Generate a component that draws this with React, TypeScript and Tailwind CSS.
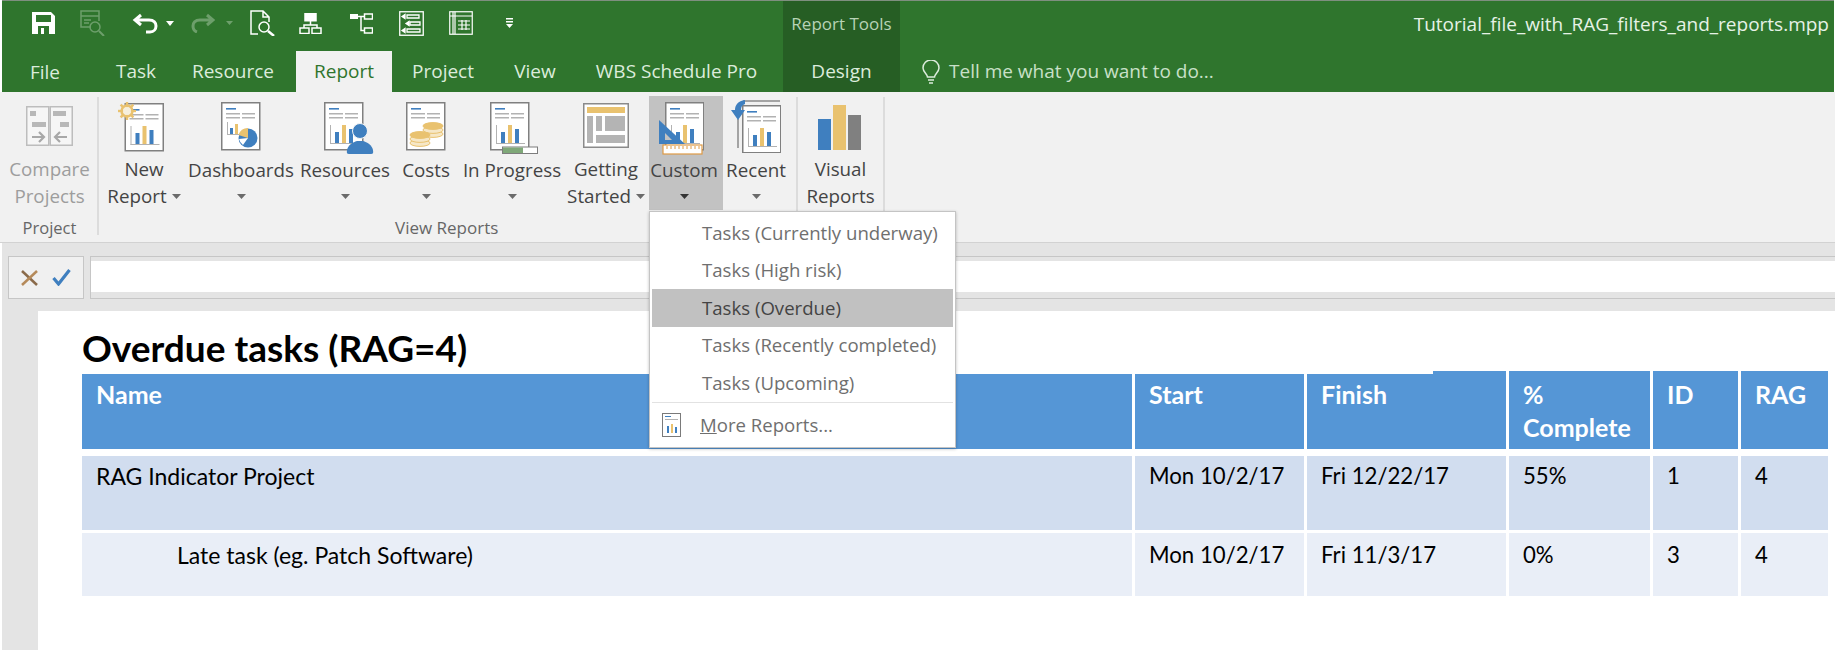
import React from "react";

const BLUE = "#3f7fbf";
const GOLD = "#e9c26f";
const GREY = "#b2b2b2";

// Shared report page glyph used by most of the ribbon buttons
function Page({ x = 0, y = 0, chart = true }: { x?: number; y?: number; chart?: boolean }) {
  return (
    <g transform={`translate(${x} ${y})`}>
      <rect x="0.75" y="0.75" width="38" height="47" fill="#fff" stroke="#808080" strokeWidth="1.5" />
      <rect x="5" y="6" width="10" height="1.6" fill={BLUE} />
      <rect x="5" y="11" width="14" height="1.5" fill={GREY} />
      <rect x="21" y="11" width="13" height="1.5" fill={GREY} />
      <rect x="5" y="15" width="14" height="1.5" fill={GREY} />
      <rect x="21" y="15" width="13" height="1.5" fill={GREY} />
      {chart && (
        <g>
          <rect x="6" y="23" width="1" height="19" fill={GREY} />
          <rect x="6" y="41" width="29" height="1" fill={GREY} />
          <rect x="11" y="30" width="4" height="11" fill={BLUE} />
          <rect x="18" y="23" width="4" height="18" fill={GOLD} />
          <rect x="25" y="27" width="4" height="14" fill={BLUE} />
        </g>
      )}
    </g>
  );
}

function CompareIcon() {
  return (
    <svg width="47" height="40" viewBox="0 0 47 40" className="mt-[10px]">
      <rect x="0.75" y="0.75" width="22" height="38.5" fill="#f6f6f6" stroke="#bdbdbd" strokeWidth="1.5" />
      <rect x="24.25" y="0.75" width="22" height="38.5" fill="#f6f6f6" stroke="#bdbdbd" strokeWidth="1.5" />
      <rect x="4" y="5" width="6" height="5" fill="#b8b8b8" />
      <rect x="27" y="5" width="13" height="5" fill="#b8b8b8" />
      <rect x="6" y="16" width="14" height="5" fill="#b8b8b8" />
      <rect x="34" y="16" width="9" height="5" fill="#b8b8b8" />
      <path d="M6 31h12M13 26l5 5-5 5" fill="none" stroke="#a8a8a8" strokeWidth="2.2" />
      <path d="M41 31H29M34 26l-5 5 5 5" fill="none" stroke="#a8a8a8" strokeWidth="2.2" />
    </svg>
  );
}

function NewReportIcon() {
  const rays = [0, 45, 90, 135];
  return (
    <svg width="46" height="50" viewBox="0 0 46 50" className="mt-[6px] mr-[6px]">
      <Page x={6.5} y={1} />
      <circle cx="9" cy="9" r="5.5" fill="#f4f4f4" stroke={GOLD} strokeWidth="2.4" />
      {rays.map((r) => (
        <rect key={r} x="7.8" y="0" width="2.4" height="18" fill={GOLD} transform={`rotate(${r} 9 9)`} />
      ))}
      <circle cx="9" cy="9" r="4" fill="#f6efdc" />
    </svg>
  );
}

function DashboardIcon() {
  return (
    <svg width="40" height="49" viewBox="0 0 40 49" className="mt-[6px]">
      <Page chart={false} />
      <rect x="6" y="20" width="1" height="13" fill={GREY} />
      <rect x="6" y="32" width="14" height="1" fill={GREY} />
      <rect x="9" y="26" width="3" height="6" fill={BLUE} />
      <rect x="14" y="22" width="3" height="10" fill={GOLD} />
      <circle cx="27" cy="36" r="9.5" fill={BLUE} />
      <path d="M27 36V26a10 10 0 0 0-9.5 7z" fill={GOLD} />
      <path d="M27 36l-9 1a10 10 0 0 0 4 6z" fill="#fff" />
    </svg>
  );
}

function ResourcesIcon() {
  return (
    <svg width="50" height="52" viewBox="0 0 50 52" className="mt-[6px] ml-[8px]">
      <Page />
      <circle cx="36" cy="29" r="7.5" fill={BLUE} stroke="#f4f4f4" strokeWidth="1" />
      <path d="M25 52c-2 0-2.500-1-2-4 1-5 6-8 10-9h6c4 1 9 4 10 9 .5 3 0 4-2 4z" fill={BLUE} />
    </svg>
  );
}

function CoinStack({ x, y, n }: { x: number; y: number; n: number }) {
  return (
    <g transform={`translate(${x} ${y})`}>
      {Array.from({ length: n }).map((_, i) => (
        <ellipse key={i} cx="0" cy={(n - 1 - i) * 4} rx="10" ry="3.400" fill={i === n - 1 ? GOLD : "#f6e7c6"} stroke={GOLD} strokeWidth="1" />
      ))}
    </g>
  );
}

function CostsIcon() {
  return (
    <svg width="40" height="49" viewBox="0 0 40 49" className="mt-[6px]">
      <Page chart={false} />
      <CoinStack x={27} y={24} n={3} />
      <CoinStack x={14} y={33} n={3} />
    </svg>
  );
}

function ProgressIcon() {
  return (
    <svg width="48" height="52" viewBox="0 0 48 52" className="mt-[6px] ml-[4px]">
      <Page />
      <rect x="12.500" y="45" width="35" height="6.500" fill="#fff" stroke="#7d7d7d" />
      <rect x="13" y="45.500" width="20" height="5.500" fill="#7fa878" />
    </svg>
  );
}

function GettingStartedIcon() {
  return (
    <svg width="46" height="45" viewBox="0 0 46 45" className="mt-[7px]">
      <rect x="0.75" y="0.75" width="44.500" height="43.500" fill="#fff" stroke="#8a8a8a" strokeWidth="1.5" />
      <rect x="4" y="4" width="38" height="6" fill={GOLD} />
      <rect x="4" y="13" width="6" height="27" fill="#b4b4b4" />
      <rect x="13" y="13" width="6" height="15" fill="#b4b4b4" />
      <rect x="22" y="13" width="20" height="15" fill="#b4b4b4" />
      <rect x="13" y="32" width="29" height="8" fill="#b4b4b4" />
    </svg>
  );
}

function CustomIcon() {
  return (
    <svg width="46" height="53" viewBox="0 0 46 53" className="mt-[6px] mr-[6px]">
      <Page x={7} />
      <path d="M1 18l26 24H1z" fill={BLUE} />
      <path d="M7 31l7 7H7z" fill="#c2c2c2" />
      <rect x="5" y="43" width="39" height="9" fill="#fff" stroke="#de9a45" strokeWidth="1.2" />
      <path d="M9 44v3M13 44v3M17 44v3M21 44v3M25 44v3M29 44v3M33 44v3M37 44v3M41 44v3" stroke="#de9a45" strokeWidth="1" />
    </svg>
  );
}

function RecentIcon() {
  return (
    <svg width="50" height="54" viewBox="0 0 50 54" className="mt-[3px]">
      <path d="M12 2h37M7 20v29" stroke="#8a8a8a" strokeWidth="1.5" fill="none" />
      <Page x={11} y={6} />
      <path d="M14 1C7 2 4 6 4 11l-4 0 7 10 7-10h-4c0-3 1-5 4-6z" fill={BLUE} />
    </svg>
  );
}

function VisualIcon() {
  return (
    <svg width="43" height="45" viewBox="0 0 43 45" className="mt-[9px] mr-[2px]">
      <rect x="0" y="14" width="13" height="31" fill={BLUE} />
      <rect x="15" y="0" width="13" height="45" fill={GOLD} />
      <rect x="30" y="10" width="13" height="35" fill="#808080" />
    </svg>
  );
}

function Caret({ dark = false }: { dark?: boolean }) {
  return (
    <svg width="9" height="5" viewBox="0 0 9 5" className="inline-block">
      <path d="M0 0h9L4.500 5z" fill={dark ? "#333" : "#6b6b6b"} />
    </svg>
  );
}

function RibbonButton({
  width,
  icon,
  line1,
  line2,
  caretInline = false,
  active = false,
  disabled = false,
}: {
  width: string;
  icon: React.ReactNode;
  line1: string;
  line2?: string;
  caretInline?: boolean;
  active?: boolean;
  disabled?: boolean;
}) {
  return (
    <div
      className={`${width} h-[114px] flex flex-col items-center shrink-0 whitespace-nowrap text-[18.8px] leading-[27px] ${
        active ? "bg-[#c2c2c2]" : ""
      } ${disabled ? "text-[#9d9d9d]" : "text-[#444444]"}`}
    >
      <div className="h-[63px] flex justify-center items-start">{icon}</div>
      <div>{line1}</div>
      <div className="h-[27px] flex items-center gap-[5px]">
        {line2 && <span>{line2}</span>}
        {caretInline && <Caret />}
        {!line2 && <Caret dark={active} />}
      </div>
    </div>
  );
}

function Separator() {
  return <div className="w-[2px] h-[138px] mt-[5px] bg-[#dcdcdc] shrink-0" />;
}

const tabs = [
  { label: "File", cls: "w-[86px] pt-[1px]" },
  { label: "Task", cls: "w-[96px]" },
  { label: "Resource", cls: "w-[98px] mr-[14px]" },
];

const menuItems = ["Tasks (Currently underway)", "Tasks (High risk)", "Tasks (Overdue)", "Tasks (Recently completed)", "Tasks (Upcoming)"];

const columns = "grid grid-cols-[1050px_169px_199px_141px_85px_87px] gap-x-[3px]";

const rows = [
  {
    cells: ["RAG Indicator Project", "Mon 10/2/17", "Fri 12/22/17", "55%", "1", "4"],
    bg: "bg-[#d1ddef]",
    wrap: "h-[74px] mt-[7px]",
    pad: "pt-[1px]",
    indent: "pl-[14px]",
  },
  {
    cells: ["Late task (eg. Patch Software)", "Mon 10/2/17", "Fri 11/3/17", "0%", "3", "4"],
    bg: "bg-[#e9eef7]",
    wrap: "h-[63px] mt-[3px]",
    pad: "pt-[3px]",
    indent: "pl-[95px]",
  },
];

export default function App() {
  return (
    <div className="relative w-[1835px] h-[653px] overflow-hidden bg-white font-['Open_Sans',sans-serif]">
      {/* Title + tabs */}
      <div className="border-t border-[#7f8f7f] ml-[2px] mr-[1px] bg-[#2f752d] text-[#dcecdc] text-[19px]">
        <div className="flex h-[50px]">
          <div className="w-[781px] flex items-center pl-[30px] pb-[6px] shrink-0">
            <svg width="23" height="22" viewBox="0 0 23 22">
              <path d="M0 0h19l4 4v18H0z" fill="#fff" />
              <rect x="4" y="3" width="15" height="7" fill="#2f752d" />
              <rect x="6" y="14" width="11" height="8" fill="#2f752d" />
              <rect x="9" y="16" width="3" height="6" fill="#fff" />
            </svg>
            <svg width="25" height="26" viewBox="0 0 25 26" fill="none" stroke="#6d9f6b" strokeWidth="1.5" className="ml-[25px]">
              <path d="M11 17H1V1h18v10M1 6h18M4 10h7M4 13h5" />
              <circle cx="15" cy="17" r="5" />
              <path d="M19 21l5 5" strokeWidth="2" />
            </svg>
            <svg width="26" height="21" viewBox="0 0 26 21" fill="none" stroke="#fff" strokeWidth="3" className="ml-[27px]">
              <path d="M9 2L3 7l6 5M3 7h14c5 0 7 3 7 6s-2 6-6 6h-4" />
            </svg>
            <svg width="8" height="5" viewBox="0 0 8 5" className="ml-[8px]"><path d="M0 0h8L4 5z" fill="#fff" /></svg>
            <svg width="24" height="20" viewBox="0 0 24 20" fill="none" stroke="#6d9f6b" strokeWidth="3" className="ml-[17px]">
              <path d="M16 2l6 5-6 5M22 7H9C4 7 2 10 2 13s1 5 4 6" />
            </svg>
            <svg width="7" height="4" viewBox="0 0 7 4" className="ml-[11px]"><path d="M0 0h7L3.500 4z" fill="#6d9f6b" /></svg>
            <svg width="25" height="26" viewBox="0 0 25 26" fill="none" stroke="#fff" strokeWidth="1.500" className="ml-[17px]">
              <path d="M8 24H1V1h12l6 6v5M13 1v6h6" />
              <circle cx="14" cy="17" r="5" />
              <path d="M18 21l6 5" strokeWidth="2.500" />
            </svg>
            <svg width="23" height="21" viewBox="0 0 23 21" fill="none" stroke="#fff" strokeWidth="1.500" className="ml-[24px]">
              <rect x="6" y="0.750" width="11" height="7" fill="#fff" />
              <path d="M11.500 8v4M5 15v-3h13v3" />
              <rect x="1" y="15" width="9" height="5.500" />
              <rect x="13" y="15" width="9" height="5.500" />
            </svg>
            <svg width="23" height="21" viewBox="0 0 23 21" fill="none" stroke="#fff" strokeWidth="1.500" className="ml-[28px]">
              <rect x="0" y="1" width="8" height="5" fill="#fff" stroke="none" />
              <path d="M8 3.500h6M11 3.500V17.500h3" />
              <rect x="14.500" y="1" width="8" height="5" />
              <rect x="14.500" y="15" width="8" height="5" />
            </svg>
            <svg width="25" height="25" viewBox="0 0 25 25" fill="none" stroke="#fff" strokeWidth="1.300" className="ml-[26px]">
              <rect x="0.750" y="0.750" width="23.500" height="23.500" />
              <path d="M8 4h12v3H8zM11 11h10v3H11zM8 18h13v3H8z" />
              <path d="M3 5.500l3-2v4zM7 12.500l3-2v4zM3 19.500l3-2v4z" fill="#fff" />
            </svg>
            <svg width="24" height="24" viewBox="0 0 24 24" fill="none" stroke="#fff" strokeWidth="1.200" className="ml-[25px]">
              <rect x="0.750" y="0.750" width="22.500" height="22.500" />
              <path d="M1 5h22M6 1v22M4 1v22M9 10h12M9 14h12M9 18h12M13 9v10M17 9v10" />
            </svg>
            <svg width="7" height="10" viewBox="0 0 7 10" className="ml-[33px]">
              <rect x="0" y="0" width="7" height="1.500" fill="#fff" />
              <rect x="0" y="3" width="7" height="1.500" fill="#fff" />
              <path d="M0 6h7L3.500 10z" fill="#fff" />
            </svg>
          </div>
          <div className="w-[117px] shrink-0 bg-[#265e24] flex items-center justify-center pb-[4px] text-[17px] text-[#b7d3b6]">
            Report Tools
          </div>
          <div className="flex-1 flex justify-end items-center pr-[5px] pb-[4px] text-[#e6f2e6] text-[19px]">
            Tutorial_file_with_RAG_filters_and_reports.mpp
          </div>
        </div>
        <div className="flex h-[41px] items-center">
          <div className="w-[781px] shrink-0 flex h-full">
            {tabs.map((t) => (
              <div key={t.label} className={`${t.cls} flex items-center justify-center`}>
                {t.label}
              </div>
            ))}
            <div className="w-[96px] h-[41px] bg-[#f1f1f1] text-[#2f752d] flex items-center justify-center">Report</div>
            <div className="w-[102px] flex items-center justify-center">Project</div>
            <div className="w-[82px] flex items-center justify-center">View</div>
            <div className="w-[201px] flex items-center justify-center">WBS Schedule Pro</div>
          </div>
          <div className="w-[117px] shrink-0 h-full bg-[#265e24] flex items-center justify-center">Design</div>
          <svg width="18" height="24" viewBox="0 0 18 24" fill="none" stroke="#dcecdc" strokeWidth="1.500" className="ml-[22px]">
            <path d="M5.500 17c0-3-4.500-5-4.500-9a8 8 0 0 1 16 0c0 4-4.500 6-4.500 9z" />
            <path d="M6 20h6M7 23h4" />
          </svg>
          <span className="ml-[9px] text-[#c9e0c8]">Tell me what you want to do...</span>
        </div>
      </div>

      {/* Ribbon */}
      <div className="h-[151px] bg-[#f1f1f1] border-b border-[#d2d2d2] flex">
        <div className="w-[95px] flex flex-col items-center ml-[2px] shrink-0 pt-[4px]">
          <RibbonButton width="w-[95px]" icon={<CompareIcon />} line1="Compare" line2="Projects" disabled />
          <div className="text-[16.500px] text-[#666] leading-[20px] mt-[8px]">Project</div>
        </div>
        <Separator />
        <div className="flex flex-col shrink-0 pt-[4px]">
          <div className="flex">
            <RibbonButton width="w-[90px]" icon={<NewReportIcon />} line1="New" line2="Report" caretInline />
            <RibbonButton width="w-[104px]" icon={<DashboardIcon />} line1="Dashboards" />
            <RibbonButton width="w-[104px]" icon={<ResourcesIcon />} line1="Resources" />
            <RibbonButton width="w-[58px]" icon={<CostsIcon />} line1="Costs" />
            <RibbonButton width="w-[98px] ml-[8px]" icon={<ProgressIcon />} line1="In Progress" />
            <RibbonButton width="w-[78px] ml-[6px]" icon={<GettingStartedIcon />} line1="Getting" line2="Started" caretInline />
            <RibbonButton width="w-[74px] ml-[4px] pr-[4px]" icon={<CustomIcon />} line1="Custom" active />
            <RibbonButton width="w-[64px] ml-[1px]" icon={<RecentIcon />} line1="Recent" />
          </div>
          <div className="text-[17px] text-[#666] leading-[20px] mt-[8px] pl-[296px]">View Reports</div>
        </div>
        <div className="ml-[8px] flex">
          <Separator />
          <div className="w-[85px] pt-[4px] shrink-0">
            <RibbonButton width="w-[85px]" icon={<VisualIcon />} line1="Visual" line2="Reports" />
          </div>
          <Separator />
        </div>
      </div>

      {/* Formula bar */}
      <div className="ml-[2px] bg-[#e4e4e4] h-[68px] pt-[13px] pl-[6px] flex">
        <div className="w-[76px] h-[43px] bg-[#f0f0f0] border border-[#c6c6c6] flex items-center justify-center gap-[14px] shrink-0">
          <svg width="17" height="16" viewBox="0 0 17 16" fill="none" strokeWidth="2.500">
            <path d="M1 1l15 14" stroke="#8a6a4a" />
            <path d="M16 1L1 15" stroke="#b58a5a" />
          </svg>
          <svg width="19" height="17" viewBox="0 0 19 17" fill="none" stroke="#3f7fbf" strokeWidth="3.200">
            <path d="M1.500 9l5 6L17.500 1" />
          </svg>
        </div>
        <div className="ml-[6px] flex-1 h-[43px] border border-r-0 border-[#c6c6c6] bg-[#e4e4e4] pt-[4px] pb-[6px]">
          <div className="h-full bg-white" />
        </div>
      </div>

      {/* Report sheet */}
      <div className="flex ml-[2px]">
        <div className="w-[36px] h-[339px] bg-[#e4e4e4] shrink-0" />
        <div className="ml-[44px] font-['Lato',sans-serif]">
          <div className="h-[63px] pt-[10px] flex items-center text-[37px] font-bold text-black">Overdue tasks (RAG=4)</div>
          <div className={`${columns} h-[75px] text-[25px] font-bold text-white leading-[33px]`}>
            <div className="bg-[#5596d6] pl-[14px] pt-[4px]">Name</div>
            <div className="bg-[#5596d6] pl-[14px] pt-[4px]">Start</div>
            <div className="relative bg-[#5596d6] pl-[14px] pt-[4px]">
              Finish
              <div className="absolute right-0 top-[-3px] w-[73px] h-[3px] bg-[#5596d6]" />
            </div>
            <div className="bg-[#5596d6] pl-[14px] mt-[-3px] pt-[7px]">
              %
              <br />
              Complete
            </div>
            <div className="bg-[#5596d6] pl-[14px] mt-[-3px] pt-[7px]">ID</div>
            <div className="bg-[#5596d6] pl-[14px] mt-[-3px] pt-[7px]">RAG</div>
          </div>
          {rows.map((r) => (
            <div key={r.cells[0]} className={`${columns} ${r.wrap} text-[22.200px] text-black leading-[38px]`}>
              {r.cells.map((c, i) => (
                <div key={i} className={`${r.bg} ${r.pad} ${i === 0 ? `${r.indent} text-[23px]` : "pl-[14px]"}`}>
                  {c}
                </div>
              ))}
            </div>
          ))}
        </div>
      </div>

      {/* Open Custom dropdown */}
      <div className="absolute left-[649px] top-[211px] w-[307px] h-[237px] bg-white border border-[#c4c4c4] shadow-[0_1px_3px_rgba(0,0,0,0.25)] pt-[2px] px-[2px] text-[18.600px] text-[#6f6f6f]">
        {menuItems.map((m) => (
          <div
            key={m}
            className={`h-[37.5px] flex items-center pl-[50px] ${m === "Tasks (Overdue)" ? "bg-[#c1c1c1] text-[#444]" : ""}`}
          >
            {m}
          </div>
        ))}
        <div className="h-[1px] bg-[#e2e2e2]" />
        <div className="flex items-center h-[44px] pl-[10px]">
          <svg width="19" height="24" viewBox="0 0 19 24">
            <rect x="0.500" y="0.500" width="18" height="23" fill="#fff" stroke="#7a7a7a" />
            <rect x="3" y="3" width="6" height="1" fill={BLUE} />
            <rect x="3" y="6" width="13" height="1" fill={GREY} />
            <rect x="5" y="13" width="2" height="7" fill={BLUE} />
            <rect x="9" y="11" width="2" height="9" fill={GOLD} />
            <rect x="13" y="14" width="2" height="6" fill={BLUE} />
          </svg>
          <span className="ml-[19px]">
            <span className="underline">M</span>ore Reports...
          </span>
        </div>
      </div>
    </div>
  );
}
